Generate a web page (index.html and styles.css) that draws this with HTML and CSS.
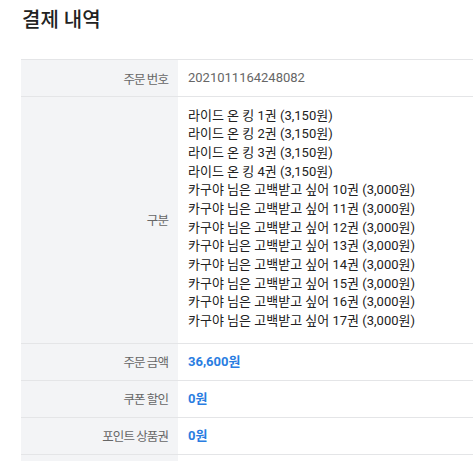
FILE: index.html
```html
<!DOCTYPE html>
<html lang="ko">
<head>
<meta charset="utf-8">
<link rel="stylesheet" href="styles.css">
</head>
<body>
<div class="page">
  <h2 class="title">결제 내역</h2>
  <div class="table">
    <div class="row">
      <div class="label">주문 번호</div>
      <div class="value muted">2021011164248082</div>
    </div>
    <div class="row">
      <div class="label">구분</div>
      <div class="value items">
        <div>라이드 온 킹 1권 (3,150원)</div>
        <div>라이드 온 킹 2권 (3,150원)</div>
        <div>라이드 온 킹 3권 (3,150원)</div>
        <div>라이드 온 킹 4권 (3,150원)</div>
        <div>카구야 님은 고백받고 싶어 10권 (3,000원)</div>
        <div>카구야 님은 고백받고 싶어 11권 (3,000원)</div>
        <div>카구야 님은 고백받고 싶어 12권 (3,000원)</div>
        <div>카구야 님은 고백받고 싶어 13권 (3,000원)</div>
        <div>카구야 님은 고백받고 싶어 14권 (3,000원)</div>
        <div>카구야 님은 고백받고 싶어 15권 (3,000원)</div>
        <div>카구야 님은 고백받고 싶어 16권 (3,000원)</div>
        <div>카구야 님은 고백받고 싶어 17권 (3,000원)</div>
      </div>
    </div>
    <div class="row">
      <div class="label">주문 금액</div>
      <div class="value price">36,600원</div>
    </div>
    <div class="row">
      <div class="label">쿠폰 할인</div>
      <div class="value price">0원</div>
    </div>
    <div class="row">
      <div class="label">포인트 상품권</div>
      <div class="value price">0원</div>
    </div>
    <div class="row">
      <div class="label">&nbsp;</div>
      <div class="value">&nbsp;</div>
    </div>
  </div>
</div>
</body>
</html>
```
FILE: styles.css
```css
html, body {
  margin: 0;
  padding: 0;
  overflow: hidden;
  background: #fff;
}
body {
  font-family: Roboto, "Noto Sans CJK KR", sans-serif;
  color: #222;
}
.page {
  padding: 0 0 0 21px;
  width: 520px;
}
.title {
  margin: 0;
  padding: 6px 0 0 1px;
  height: 59px;
  box-sizing: border-box;
  font-size: 20px;
  font-weight: 500;
  color: #222;
  line-height: 28px;
}
.table {
  border-top: 1px solid #e4e5e7;
}
.row {
  display: flex;
  border-bottom: 1px solid #e4e5e7;
}
.label {
  width: 157px;
  flex: none;
  box-sizing: border-box;
  background: #f3f4f6;
  color: #666;
  font-size: 12.5px;
  padding: 0 10px;
  display: flex;
  align-items: center;
  justify-content: flex-end;
  letter-spacing: -0.9px;
}
.value {
  flex: 1;
  padding: 9px 10px;
  font-size: 13px;
  line-height: 18px;
  min-height: 18px;
}
.value.muted {
  color: #666;
}
.items {
  color: #222;
  line-height: 18.67px;
  padding-top: 9.5px;
  padding-bottom: 12px;
}
.price {
  color: #2a7de1;
  font-weight: 700;
}
```
